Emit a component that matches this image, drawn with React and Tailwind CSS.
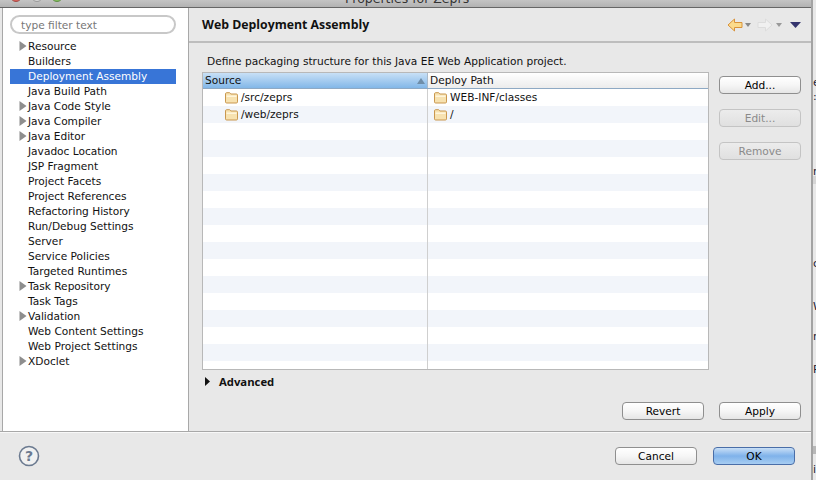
import React from "react";

const font = { fontFamily: '"DejaVu Sans", sans-serif' };
const bold = { fontFamily: '"Open Sans", sans-serif' };

const tree = [
  ["Resource", 1], ["Builders", 0], ["Deployment Assembly", 0, 1], ["Java Build Path", 0], ["Java Code Style", 1],
  ["Java Compiler", 1], ["Java Editor", 1], ["Javadoc Location", 0], ["JSP Fragment", 0], ["Project Facets", 0],
  ["Project References", 0], ["Refactoring History", 0], ["Run/Debug Settings", 0], ["Server", 0], ["Service Policies", 0],
  ["Targeted Runtimes", 0], ["Task Repository", 1], ["Task Tags", 0], ["Validation", 1], ["Web Content Settings", 0],
  ["Web Project Settings", 0], ["XDoclet", 1],
];

function Folder() {
  return (
    <svg width="13" height="12" viewBox="0 0 13 12" className="shrink-0">
      <path d="M0.5 3V1.8C.5 1.1 1 .7 1.6.7h2.8c.5 0 .8.2 1 .6l.4.7h5.6c.7 0 1.1.4 1.1 1.1v6.8c0 .7-.4 1.1-1.1 1.1H1.6c-.7 0-1.1-.4-1.1-1.1V3z" fill="#f7e2b0" stroke="#c9974e" />
      <rect x="1.5" y="3.5" width="10" height="1.5" fill="#fff5dc" />
    </svg>
  );
}

function Arrow() {
  return (
    <svg width="8" height="10" viewBox="0 0 8 10" className="shrink-0">
      <path d="M0.5 0 L7.5 5 L0.5 10 Z" fill="#8e8e8e" />
    </svg>
  );
}

function Btn({ children, disabled }) {
  return (
    <div
      className={`w-[82px] h-[18px] flex items-center justify-center rounded-[4px] border text-[10.6px] leading-none ${
        disabled
          ? "border-[#c4c4c4] bg-gradient-to-b from-[#ececec] to-[#e0e0e0] text-[#8a8a8a]"
          : "border-[#8f8f8f] bg-gradient-to-b from-white via-[#f6f6f6] to-[#e6e6e6] text-black"
      }`}
    >
      {children}
    </div>
  );
}

function TreeRow({ label, arrow, selected }) {
  return (
    <div className={`relative h-[15px] flex items-center text-[10.6px] leading-none ${selected ? "bg-[#3875d7] text-white" : "text-[#111]"}`}>
      {arrow ? (
        <span className="absolute left-[9px] top-[2px]"><Arrow /></span>
      ) : null}
      <span className="pl-[18px] whitespace-nowrap">{label}</span>
    </div>
  );
}

function TableRow({ i, src, dest }) {
  return (
    <div className={`h-[17px] flex shrink-0 ${i % 2 ? "bg-[#f2f5fa]" : "bg-white"}`}>
      <div className="w-[225px] shrink-0 border-r border-[#cfcfcf] flex items-center pl-[22px] gap-[3px] text-[10.6px] leading-none text-[#111]">
        {src ? <Folder /> : null}
        <span>{src}</span>
      </div>
      <div className="flex-1 flex items-center pl-[6px] gap-[3px] text-[10.6px] leading-none text-[#111]">
        {dest ? <Folder /> : null}
        <span>{dest}</span>
      </div>
    </div>
  );
}

const rows = Array.from({ length: 17 }, (_, i) => i);

export default function App() {
  return (
    <div className="w-[816px] h-[480px] flex overflow-hidden bg-[#e9e9e9]" style={font}>
      <div className="w-[813px] shrink-0 flex flex-col bg-[#e8e8e8] border-r-2 border-[#a3a3a3]">
        <div className="relative h-[8px] shrink-0 overflow-hidden bg-gradient-to-b from-[#c4c4c4] to-[#b2b2b2] border-b border-[#666]">
          <span className="absolute left-[10px] top-[-10px] w-[12px] h-[12px] rounded-full bg-[#d9635c] border border-[#a34a44]" />
          <span className="absolute left-[31px] top-[-10px] w-[12px] h-[12px] rounded-full bg-[#d6d6d6] border border-[#999]" />
          <span className="absolute left-[51px] top-[-10px] w-[12px] h-[12px] rounded-full bg-[#86bf60] border border-[#5f8f44]" />
          <span className="absolute left-[345px] top-[-9px] text-[12.5px] leading-[16px] text-[#333] whitespace-nowrap">Properties for Zeprs</span>
        </div>

        <div className="flex-1 flex min-h-0 pl-[2px] bg-[#e8e8e8]">
          <div className="w-[187px] shrink-0 bg-white border-r border-[#a8a8a8] border-l border-l-[#a8a8a8] pl-[7px] pr-[12px] pt-[7px]">
            <div className="h-[19px] rounded-full border-2 border-[#c8c8c8] flex items-center pl-[9px] pt-[1px] text-[10.6px] leading-none text-[#777]">
              type filter text
            </div>
            <div className="mt-[5px]">
              {tree.map(([label, arrow, selected]) => (
                <TreeRow key={label} label={label} arrow={arrow} selected={selected} />
              ))}
            </div>
          </div>

          <div className="flex-1 flex flex-col min-w-0">
            <div className="h-[35px] shrink-0 border-b-2 border-[#bdbdbd] flex items-center justify-between pl-[13px] pr-[10px]">
              <span className="font-bold text-[12.3px] leading-none text-[#111] pt-[1px]" style={bold}>Web Deployment Assembly</span>
              <div className="flex items-center">
                <svg width="16" height="14" viewBox="0 0 16 14">
                  <path d="M7.5 1 L1 7 L7.5 13 V9.5 H15 V4.5 H7.5 Z" fill="#fbdb8c" stroke="#d8923a" />
                </svg>
                <svg width="6" height="4" viewBox="0 0 6 4" className="ml-[2px]"><path d="M0 0H6L3 4Z" fill="#888" /></svg>
                <svg width="16" height="14" viewBox="0 0 16 14" className="ml-[6px]">
                  <path d="M8.5 1 L15 7 L8.5 13 V9.5 H1 V4.5 H8.5 Z" fill="#f0f0f0" stroke="#dcdcdc" />
                </svg>
                <svg width="6" height="4" viewBox="0 0 6 4" className="ml-[3px]"><path d="M0 0H6L3 4Z" fill="#999" /></svg>
                <svg width="11" height="6" viewBox="0 0 11 6" className="ml-[8px]"><path d="M0 0H11L5.5 6Z" fill="#35356e" /></svg>
              </div>
            </div>

            <div className="pl-[18px] pt-[12px] text-[10.6px] leading-[13px] text-[#111] whitespace-nowrap">
              Define packaging structure for this Java EE Web Application project.
            </div>

            <div className="flex pl-[13px] pr-[10px] pt-[4px]">
              <div className="w-[507px] h-[298px] shrink-0 border border-[#b8b8b8] bg-white overflow-hidden">
                <div className="h-[16px] flex border-b border-[#8ea9c4]">
                  <div className="w-[225px] shrink-0 relative flex items-center pl-[2px] text-[10.6px] leading-none text-[#111] bg-gradient-to-b from-[#c8e0f6] to-[#82b7e8] border-r border-[#a9b9c9]">
                    Source
                    <svg width="8" height="6" viewBox="0 0 8 6" className="absolute right-[2px] top-[5px]"><path d="M4 0L8 6H0Z" fill="#6f8ea9" /></svg>
                  </div>
                  <div className="flex-1 flex items-center pl-[2px] text-[10.6px] leading-none text-[#111] bg-gradient-to-b from-white to-[#ececec]">
                    Deploy Path
                  </div>
                </div>
                {rows.map((i) => (
                  <TableRow
                    key={i}
                    i={i}
                    src={i === 0 ? "/src/zeprs" : i === 1 ? "/web/zeprs" : ""}
                    dest={i === 0 ? "WEB-INF/classes" : i === 1 ? "/" : ""}
                  />
                ))}
              </div>
              <div className="flex flex-col gap-[15px] ml-[10px] pt-[4px]">
                <Btn>Add...</Btn>
                <Btn disabled>Edit...</Btn>
                <Btn disabled>Remove</Btn>
              </div>
            </div>

            <div className="flex items-center pl-[16px] pt-[2px] h-[19px] box-content">
              <svg width="5" height="9" viewBox="0 0 5 9" className="shrink-0"><path d="M0 0L5 4.5L0 9Z" fill="#111" /></svg>
              <span className="ml-[9px] font-bold text-[11.3px] leading-none text-[#111]" style={bold}>Advanced</span>
            </div>

            <div className="flex justify-end gap-[15px] pr-[10px] pt-[11px]">
              <Btn>Revert</Btn>
              <Btn>Apply</Btn>
            </div>
          </div>
        </div>

        <div className="h-[49px] shrink-0 border-t border-[#a8a8a8] flex items-center justify-between pl-[18px] pr-[16px] bg-[#e8e8e8] shadow-[inset_0_1px_0_#f8f8f8]">
          <svg width="22" height="22" viewBox="0 0 22 22">
            <circle cx="11" cy="11" r="9.5" fill="#f1f1f1" stroke="#6b7a90" strokeWidth="1.6" />
            <text x="11" y="16" textAnchor="middle" fontSize="14" fontWeight="bold" fill="#6b7a90" fontFamily="DejaVu Sans">?</text>
          </svg>
          <div className="flex gap-[16px]">
            <Btn>Cancel</Btn>
            <div className="w-[82px] h-[18px] flex items-center justify-center rounded-[4px] border border-[#4a6ea8] bg-gradient-to-b from-[#c9dff6] via-[#7fb2ea] to-[#a7cdf2] text-[10.6px] leading-none text-black">OK</div>
          </div>
        </div>
      </div>

      <div className="relative flex-1 bg-[#e9e9e9] overflow-hidden text-[11px] leading-none text-[#223]">
        <div className="absolute inset-x-0 top-[176px] h-[8px] bg-[#d6d6d6]" />
        <div className="absolute inset-x-0 top-[446px] h-[8px] bg-[#b8b8b8]" />
        <span className="absolute left-0 top-[77px]">e</span>
        <span className="absolute left-0 top-[91px]">:</span>
        <span className="absolute left-0 top-[166px]">r</span>
        <span className="absolute left-0 top-[258px]">c</span>
        <span className="absolute left-0 top-[301px]">W</span>
        <span className="absolute left-0 top-[331px]">r</span>
        <span className="absolute left-0 top-[364px]">P</span>
        <span className="absolute left-0 top-[464px]">i</span>
      </div>
    </div>
  );
}
